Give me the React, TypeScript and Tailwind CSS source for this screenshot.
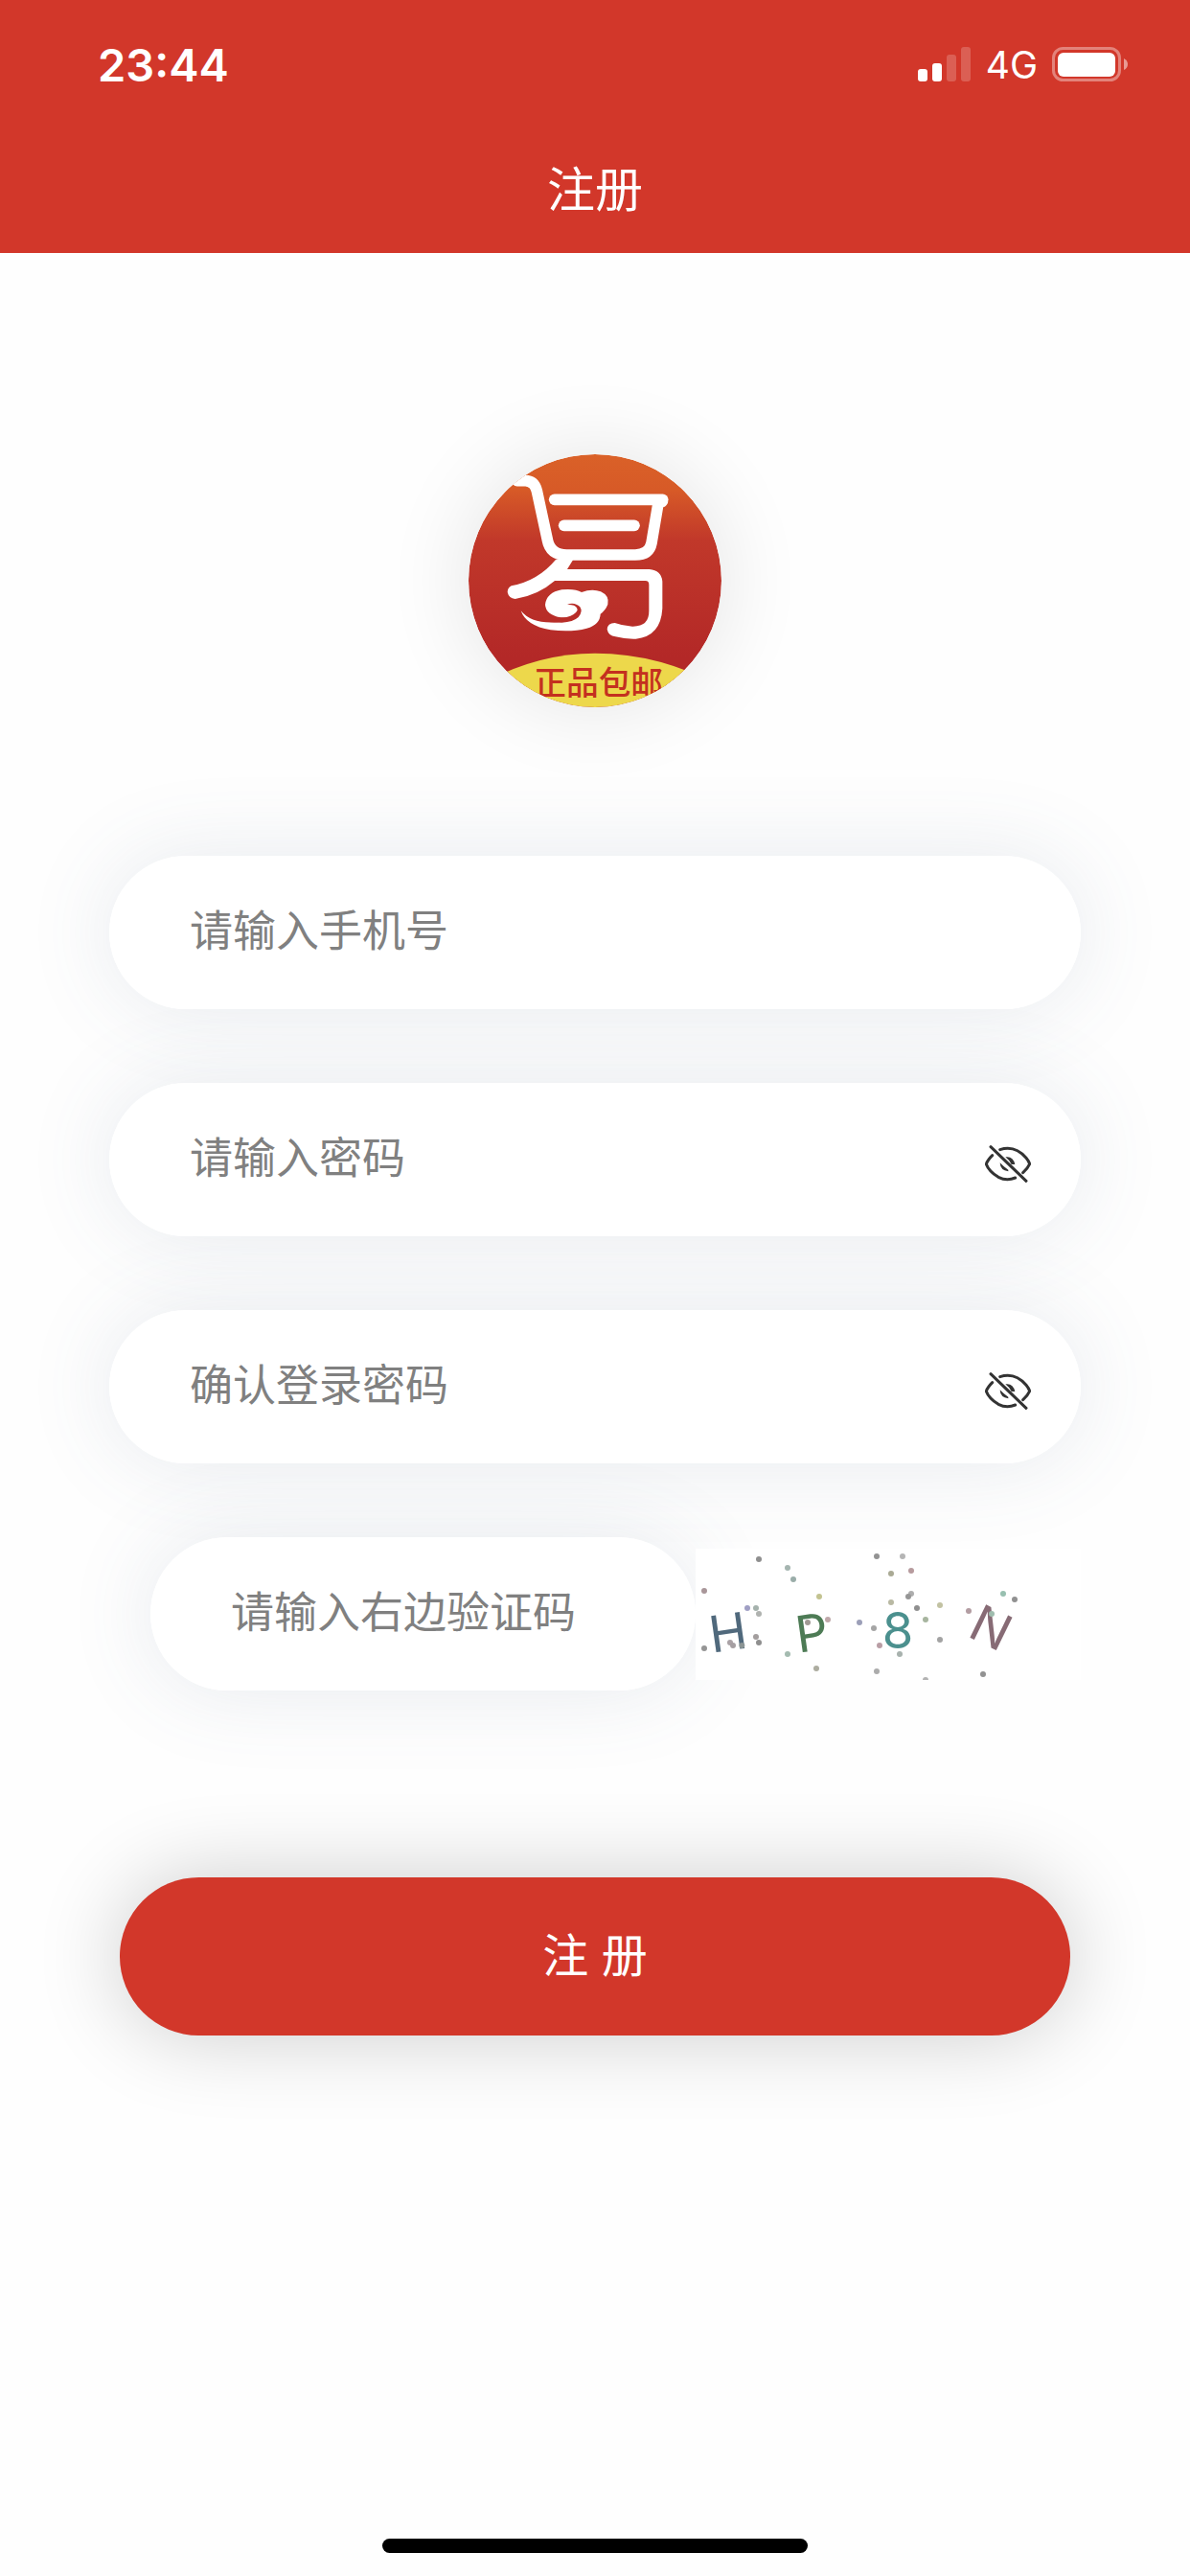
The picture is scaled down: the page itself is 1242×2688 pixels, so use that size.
import { useState } from "react"

const logoRed = "#c4301f"

const StatusBar = () => {
    return (
        <div className="flex h-33 items-center justify-between pr-16 pl-[102px] pt-0.5">
            <span className="font-['Inter'] text-[47px] font-semibold leading-none">23:44</span>
            <div className="flex items-center gap-[15px]">
                <svg className="h-9 w-14" viewBox="0 0 56 36" fill="#fff">
                    <rect x="0" y="23" width="10" height="13" rx="3" />
                    <rect x="15" y="17" width="10" height="19" rx="3" />
                    <rect x="30" y="8" width="10" height="28" rx="3" opacity=".2" />
                    <rect x="45" y="0" width="10" height="36" rx="3" opacity=".2" />
                </svg>
                <span className="font-['Inter'] text-[39px] leading-none">4G</span>
                <svg className="h-9 w-20" viewBox="0 0 80 36">
                    <rect x="1.5" y="1.5" width="69" height="33" rx="10" fill="none" stroke="#fff" strokeWidth="3" opacity=".38" />
                    <rect x="6" y="6" width="60" height="25" rx="6" fill="#fff" />
                    <path d="M75 12q4 2 4 6t-4 6z" fill="#fff" opacity=".5" />
                </svg>
            </div>
        </div>
    )
}

const Logo = () => {
    return (
        <svg className="size-66 rounded-full shadow-[0_0_90px_rgba(0,0,0,0.11)]" viewBox="268 252 792 792" role="img" aria-label="易 正品包邮">
            <defs>
                <linearGradient id="logoBg" x1="0" y1="0" x2="0" y2="1">
                    <stop offset="0" stopColor="#da6128" />
                    <stop offset=".14" stopColor="#d75a27" />
                    <stop offset=".34" stopColor="#c1382a" />
                    <stop offset=".8" stopColor="#b32827" />
                </linearGradient>
                <clipPath id="logoClip">
                    <circle cx="664" cy="648" r="396" />
                </clipPath>
            </defs>
            <g clipPath="url(#logoClip)">
                <rect x="268" y="252" width="792" height="792" fill="url(#logoBg)" />
                <g fill="none" stroke="#fff" strokeWidth="35" strokeLinecap="round" strokeLinejoin="round">
                    <path d="M420 335H446Q474 335 482 367L515 520Q524 567 575 567H790Q834 567 841 530L863 400" />
                    <path d="M537 394H876" />
                    <path d="M567 475H787" />
                </g>
                <path d="M541 582Q486 648 402 664Q390 670 390 684Q394 703 414 705Q485 694 538 648H822Q833 648 833 660V742Q834 792 781 791Q750 789 726 780Q703 781 702 800Q706 820 728 823Q758 831 792 830Q870 822 875 735V650Q872 615 834 612H577L597 580Z" fill="#fff" />
                <path d="M855 400H893Q891 412 879 418Z" fill="#fff" />
                <path d="M432 742Q465 784 545 778Q590 775 609 760Q583 766 555 763Q510 754 508 723Q512 685 560 676Q602 672 622 684Q655 672 682 682Q710 695 704 722Q697 740 681 752Q680 785 638 797Q590 810 525 802Q448 789 432 742Z" fill="#fff" />
                <path d="M577 722Q601 714 617 730Q627 745 612 762Q596 777 560 779Q520 779 490 770L520 755Q545 767 575 762Q602 755 609 740Q608 726 590 724Z" fill="#b82d28" />
                <path d="M268 1060V995Q460 875 664 875Q868 875 1060 980V1060Z" fill="#edd84b" />
                <text x="675" y="1005" textAnchor="middle" fontSize="101" fontWeight="500" fill={logoRed} className="font-['Noto_Sans_CJK_SC',sans-serif]">正品包邮</text>
            </g>
        </svg>
    )
}

const EyeOff = () => {
    return (
        <svg className="h-10 w-12" viewBox="0 0 144 120" fill="none" stroke="#333" strokeWidth="9" strokeLinecap="round">
            <path d="M18 8L129 115" />
            <path d="M47 17Q94 2 129 43Q138 54 140 62Q134 76 119 89" />
            <path d="M23 35Q8 50 4 62Q12 84 42 103Q68 116 95 105" />
            <path d="M64 40Q88 36 94 63L83 63Q77 50 64 40Z M47 58Q48 82 73 85L73 80Q60 72 47 58Z" fill="#333" stroke="none" />
        </svg>
    )
}

interface FieldProps {
    label: string
    type?: string
    secret?: boolean
    className?: string
}

const Field = ({ label, type = "text", secret = false, className = "" }: FieldProps) => {
    const [visible, setVisible] = useState(false)
    return (
        <div className={`rounded-full shadow-[0_0_90px_rgba(80,100,130,0.13)] ${className}`}>
            <div className="relative z-10 flex h-40 items-center rounded-full bg-white pr-13 pl-21">
                <input
                    aria-label={label}
                    type={secret && !visible ? "password" : type}
                    placeholder={label}
                    className="min-w-0 flex-1 bg-transparent pb-2 text-[45px] outline-none placeholder:text-[#808080]"
                />
                {secret && (
                    <button type="button" aria-label="显示密码" className="mt-2" onClick={() => setVisible(!visible)}>
                        <EyeOff />
                    </button>
                )}
            </div>
        </div>
    )
}

const dots = [
    [276, 108, "#8f8f8f"], [366, 135, "#a5b5b0"], [384, 171, "#9aada9"], [105, 207, "#a99699"],
    [465, 225, "#c3c391"], [240, 261, "#a09fc4"], [267, 261, "#a5b2ad"], [276, 279, "#b0b3b0"],
    [429, 306, "#a09a94"], [492, 297, "#c0a8aa"], [591, 306, "#9c9fb8"], [105, 387, "#959595"],
    [186, 369, "#aaa2a6"], [195, 378, "#a59fa2"], [223, 378, "#8b9494"], [267, 351, "#a39e9e"],
    [276, 369, "#8f8f8f"], [366, 405, "#a4bbb0"], [456, 450, "#adada0"], [645, 99, "#939393"],
    [726, 99, "#b5b5b5"], [753, 144, "#b79b9e"], [690, 153, "#aaaa95"], [753, 216, "#adadad"],
    [744, 225, "#969696"], [690, 243, "#b9b9a3"], [771, 261, "#8f8f8f"], [843, 252, "#c2c2a2"],
    [798, 297, "#a7b59f"], [636, 324, "#a5a5a5"], [654, 378, "#b99ea5"], [843, 360, "#a3a3a3"],
    [717, 405, "#a8b2ae"], [645, 459, "#acacac"], [798, 486, "#b3b3b3"], [978, 468, "#929292"],
    [933, 270, "#b39da2"], [1005, 279, "#9fbcae"], [1041, 216, "#98c0b0"], [1077, 234, "#919191"],
] as const

const Captcha = () => {
    return (
        <svg className="relative z-10 h-[137px] w-[402px] shrink-0 bg-white font-['Inter']" viewBox="78 75 1206 411" role="img" aria-label="HP8N">
            <g fontSize="158" textAnchor="middle">
                <text transform="translate(187 393) rotate(-8)" fill="#50697c">H</text>
                <text transform="translate(450 394) rotate(-8)" fill="#4d7b55">P</text>
                <text x="711" y="388" fill="#4b908e">8</text>
                <text transform="translate(978 373) rotate(26)" fill="#876b75">N</text>
            </g>
            {dots.map(([x, y, color]) => (
                <circle key={`${x}-${y}`} cx={x} cy={y} r="9" fill={color} />
            ))}
        </svg>
    )
}

const App = () => {
    return (
        <div className="flex min-h-screen flex-col bg-[#fefefe] font-['Noto_Sans_CJK_SC',sans-serif]">
            <header className="bg-[#d2372a] text-white">
                <StatusBar />
                <h1 className="flex h-33 items-center justify-center pb-2 text-[50px] font-normal">注册</h1>
            </header>
            <main className="flex flex-1 flex-col items-center px-[114px] pt-[210px]">
                <Logo />
                <form className="mt-[155px] flex w-full flex-col" onSubmit={(e) => e.preventDefault()}>
                    <div className="flex flex-col gap-[77px]">
                        <Field label="请输入手机号" type="tel" />
                        <Field label="请输入密码" secret />
                        <Field label="确认登录密码" secret />
                        <div className="flex items-center pl-[43px]">
                            <Field label="请输入右边验证码" className="min-w-0 flex-1" />
                            <Captcha />
                        </div>
                    </div>
                    <button
                        type="submit"
                        className="mx-[11px] mt-[195px] h-[165px] rounded-full bg-[#d2372a] pb-0.5 font-['Inter','Noto_Sans_CJK_SC',sans-serif] text-[48px] text-white shadow-[0_0_90px_rgba(0,0,0,0.2)]"
                    >
                        注 册
                    </button>
                </form>
            </main>
            <footer className="flex justify-center pb-6">
                <div className="h-[15px] w-111 rounded-full bg-black" />
            </footer>
        </div>
    )
}

export default App
